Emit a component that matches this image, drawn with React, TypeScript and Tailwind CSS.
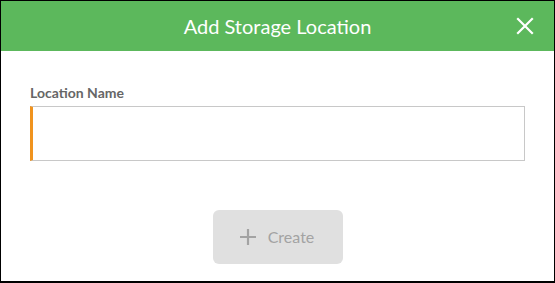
import * as React from "react";

export default function App() {
  const [name, setName] = React.useState("");

  return (
    <div
      className="w-[555px] h-[283px] bg-white border-l border-t border-r border-b-2 border-black flex flex-col"
      style={{ fontFamily: "Lato, 'Open Sans', sans-serif" }}
    >
      {/* header */}
      <div className="relative h-[50px] bg-[#5cb85c] flex items-center justify-center">
        <h1 className="text-white text-[20px] leading-none">Add Storage Location</h1>
        <button className="absolute right-[20px] top-[16px] text-white" aria-label="Close">
          <svg width="18" height="18" viewBox="0 0 18 18" fill="none" stroke="currentColor" strokeWidth="2.2" strokeLinecap="square">
            <path d="M2 2 L16 16 M16 2 L2 16" />
          </svg>
        </button>
      </div>

      {/* form */}
      <div className="flex-1 flex flex-col px-[29px] pt-[35px]">
        <label className="text-[14px] font-bold text-[#666] leading-none mb-[6px]">Location Name</label>
        <input
          value={name}
          onChange={(e) => setName(e.target.value)}
          className="h-[55px] w-[495px] border border-[#c8c8c8] border-l-[3px] border-l-[#f0931e] outline-none px-3 text-[15px]"
        />
        <div className="flex justify-center mt-[49px]">
          <button
            disabled
            className="w-[130px] h-[54px] rounded-[6px] bg-[#e0e0e0] text-[#a3a3a3] text-[16px] flex items-center justify-center gap-[11px] pr-[2px]"
          >
            <svg width="18" height="18" viewBox="0 0 18 18" fill="none" stroke="currentColor" strokeWidth="2.2">
              <path d="M9 1 V17 M1 9 H17" />
            </svg>
            <span>Create</span>
          </button>
        </div>
      </div>
    </div>
  );
}
